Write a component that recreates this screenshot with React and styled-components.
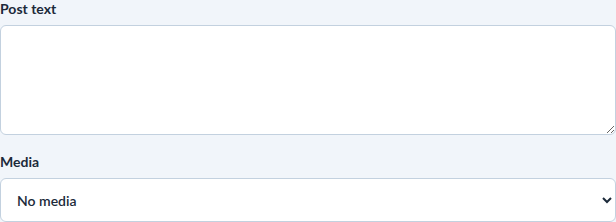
import styled, { createGlobalStyle } from "styled-components";

const Global = createGlobalStyle`
  html, body {
    margin: 0;
    background: #f1f5fa;
  }
  body {
    font-family: Lato, "Noto Sans", sans-serif;
    color: #1c2a3a;
  }
`;

const Form = styled.div`
  display: flex;
  flex-direction: column;
  gap: 18px;
  width: 616px;
`;

const Field = styled.div`
  display: flex;
  flex-direction: column;
  gap: 8px;
`;

const Label = styled.label`
  font-size: 14px;
  line-height: 17px;
  font-weight: 700;
  color: #1c2a3a;
`;

const TextArea = styled.textarea`
  box-sizing: border-box;
  width: 100%;
  height: 110px;
  margin: 0;
  padding: 10px 16px;
  border: 1px solid #c3d1df;
  border-radius: 6px;
  background: #fff;
  font: inherit;
  font-size: 14px;
  resize: vertical;
  outline: none;
`;

const Select = styled.select`
  box-sizing: border-box;
  width: 100%;
  height: 44px;
  margin: 0;
  padding: 0 8px 0 12px;
  border: 1px solid #c3d1df;
  border-radius: 6px;
  background: #fff;
  font-family: inherit;
  font-size: 14px;
  font-weight: 600;
  color: #1c2a3a;
  outline: none;
`;

export default function App() {
  return (
    <>
      <Global />
      <Form>
        <Field>
          <Label htmlFor="post-text">Post text</Label>
          <TextArea id="post-text" />
        </Field>
        <Field>
          <Label htmlFor="media">Media</Label>
          <Select id="media" defaultValue="none">
            <option value="none">No media</option>
            <option value="image">Image</option>
            <option value="video">Video</option>
          </Select>
        </Field>
      </Form>
    </>
  );
}
